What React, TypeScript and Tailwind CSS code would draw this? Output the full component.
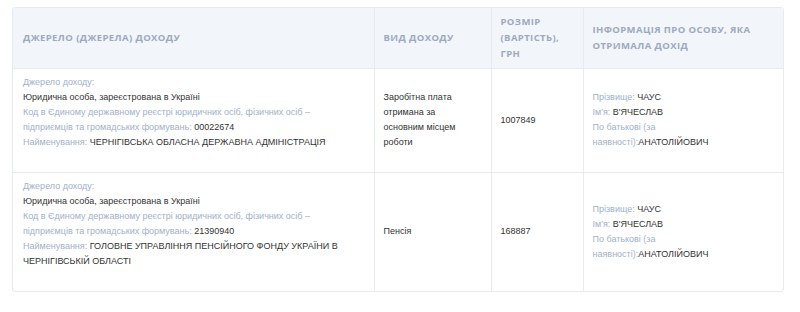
const rows = [
  {
    code: "00022674",
    name: "ЧЕРНІГІВСЬКА ОБЛАСНА ДЕРЖАВНА АДМІНІСТРАЦІЯ",
    kind: ["Заробітна плата", "отримана за", "основним місцем", "роботи"],
    amount: "1007849",
    h: "h-[104px]",
  },
  {
    code: "21390940",
    name: "ГОЛОВНЕ УПРАВЛІННЯ ПЕНСІЙНОГО ФОНДУ УКРАЇНИ В ЧЕРНІГІВСЬКІЙ ОБЛАСТІ",
    kind: ["Пенсія"],
    amount: "168887",
    h: "h-[119px]",
  },
];

function Label({ children }: { children: React.ReactNode }) {
  return <span className="text-[#9fb0c9]">{children}</span>;
}

export default function App() {
  return (
    <div className="w-[800px] h-[312px] bg-white pt-[7px] pl-[12px]">
      <div className="w-[772px] overflow-hidden rounded-[3px] border border-[#e6ebf2]">
        <table className="w-full table-fixed border-collapse font-['Liberation_Sans',Arial,sans-serif] text-[9px] leading-[15px] text-[#333]">
          <colgroup>
            <col className="w-[361px]" />
            <col className="w-[117px]" />
            <col className="w-[92px]" />
            <col />
          </colgroup>
          <thead>
            <tr className="h-[60px] bg-[#f2f6fa] text-left font-['Open_Sans',sans-serif] text-[9.5px] font-bold uppercase leading-[16px] tracking-[0.4px] text-[#9ea9c0]">
              <th className="px-[10px] align-middle">Джерело (джерела) доходу</th>
              <th className="border-l border-[#e6ebf2] px-[9px] align-middle">Вид доходу</th>
              <th className="border-l border-[#e6ebf2] px-[9px] align-middle">
                Розмір (вартість), грн
              </th>
              <th className="border-l border-[#e6ebf2] px-[9px] pr-[20px] align-middle">
                Інформація про особу, яка отримала дохід
              </th>
            </tr>
          </thead>
          <tbody>
            {rows.map((r) => (
              <tr key={r.code} className={`${r.h} border-t border-[#e6ebf2]`}>
                <td className="px-[10px] pt-[6px] pb-[22px] align-middle">
                  <Label>Джерело доходу:</Label>
                  <br />
                  Юридична особа, зареєстрована в Україні
                  <br />
                  <Label>
                    Код в Єдиному державному реєстрі юридичних осіб, фізичних осіб –
                    <br />
                    підприємців та громадських формувань:
                  </Label>{" "}
                  {r.code}
                  <br />
                  <Label>Найменування:</Label> {r.name}
                </td>
                <td className="border-l border-[#e6ebf2] px-[9px] align-middle">
                  {r.kind.map((k, i) => (
                    <span key={i}>
                      {i > 0 && <br />}
                      {k}
                    </span>
                  ))}
                </td>
                <td className="border-l border-[#e6ebf2] px-[9px] align-middle">{r.amount}</td>
                <td className="border-l border-[#e6ebf2] px-[9px] align-middle">
                  <Label>Прізвище:</Label> ЧАУС
                  <br />
                  <Label>Ім'я:</Label> В'ЯЧЕСЛАВ
                  <br />
                  <Label>
                    По батькові (за
                    <br />
                    наявності):
                  </Label>
                  АНАТОЛІЙОВИЧ
                </td>
              </tr>
            ))}
          </tbody>
        </table>
      </div>
    </div>
  );
}
